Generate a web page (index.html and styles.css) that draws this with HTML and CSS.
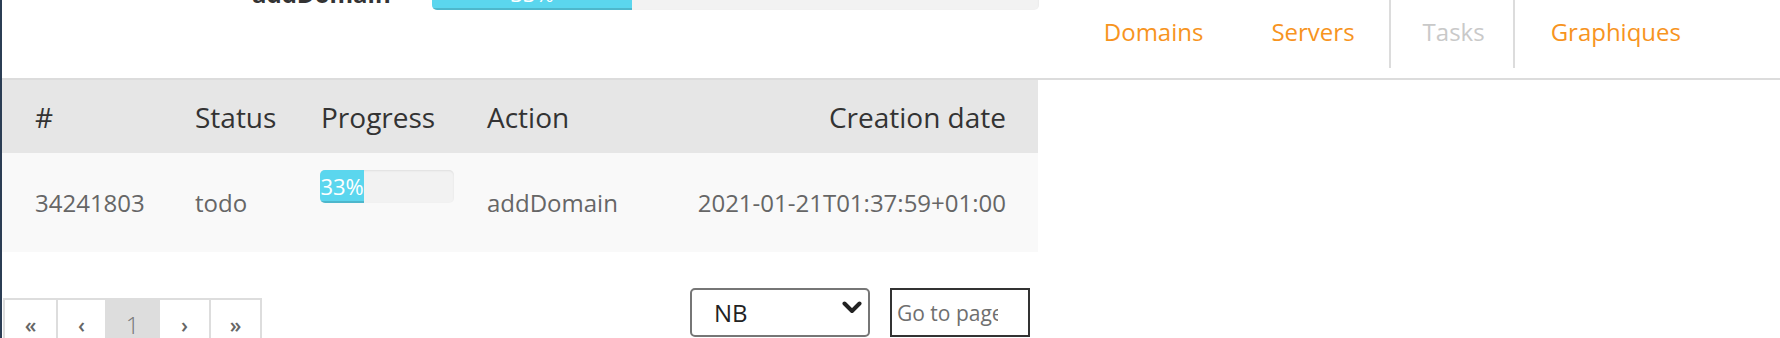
FILE: index.html
```html
<!DOCTYPE html>
<html lang="en">
<head>
<meta charset="utf-8">
<title>Tasks</title>
<link rel="stylesheet" href="styles.css">
</head>
<body>
<div class="page">
  <header class="topbar">
    <div class="prev-row">
      <span class="prev-action">addDomain</span>
      <div class="progress progress-wide"><div class="progress-bar" style="width:33%">33%</div></div>
    </div>
    <nav class="nav">
      <a class="nav-item" href="#">Domains</a>
      <a class="nav-item" href="#">Servers</a>
      <a class="nav-item nav-item-active" href="#">Tasks</a>
      <a class="nav-item nav-item-last" href="#">Graphiques</a>
    </nav>
  </header>

  <main class="content">
    <div class="tasks">
      <div class="tasks-row tasks-head">
        <div class="cell">#</div>
        <div class="cell">Status</div>
        <div class="cell">Progress</div>
        <div class="cell">Action</div>
        <div class="cell cell-right">Creation date</div>
      </div>
      <div class="tasks-row tasks-body">
        <div class="cell">34241803</div>
        <div class="cell">todo</div>
        <div class="cell"><div class="progress progress-small"><div class="progress-bar" style="width:33%">33%</div></div></div>
        <div class="cell">addDomain</div>
        <div class="cell cell-right">2021-01-21T01:37:59+01:00</div>
      </div>
    </div>

    <div class="controls">
      <ul class="pagination">
        <li class="page-item page-first"><span class="page-link page-arrow">«</span></li>
        <li class="page-item page-prev"><span class="page-link page-arrow">‹</span></li>
        <li class="page-item page-item-active"><span class="page-link">1</span></li>
        <li class="page-item page-next"><span class="page-link page-arrow">›</span></li>
        <li class="page-item page-last"><span class="page-link page-arrow">»</span></li>
      </ul>
      <div class="controls-right">
        <div class="select-wrap">
          <select class="select-nb"><option>NB</option></select>
          <svg class="select-chevron" width="20" height="13" viewBox="0 0 20 13" aria-hidden="true"><polyline points="2.5,2.5 10,10 17.5,2.5" fill="none" stroke="#222" stroke-width="4" stroke-linecap="round" stroke-linejoin="round"/></svg>
        </div>
        <input class="goto" type="text" placeholder="Go to page">
      </div>
    </div>
  </main>
</div>
</body>
</html>
```

FILE: styles.css
```css
* { box-sizing: border-box; }

html, body {
  margin: 0;
  padding: 0;
  background: #fff;
}

body {
  font-family: "Open Sans", "Noto Sans", "Liberation Sans", sans-serif;
  overflow: hidden;
}

.page {
  border-left: 2px solid #2b3d54;
  min-height: 338px;
}

/* ---------- top bar ---------- */
.topbar {
  display: flex;
  align-items: flex-start;
  height: 80px;
  border-bottom: 2px solid #dcdcdc;
}

.prev-row {
  display: flex;
  align-items: flex-start;
  margin-top: -23px;
  padding-left: 250px;
  width: 1037px;
}

.prev-action {
  width: 180px;
  font-size: 24px;
  font-weight: 700;
  line-height: 33px;
  color: #333;
}

.progress {
  height: 33px;
  background: #f2f2f2;
  border-radius: 5px;
  box-shadow: inset 0 1px 2px rgba(0, 0, 0, 0.08);
  overflow: hidden;
  display: flex;
}

.progress-wide { width: 607px; }

.progress-bar {
  height: 100%;
  background: #5bd6ee;
  box-shadow: inset 0 -2px 0 rgba(0, 0, 0, 0.14);
  color: #fff;
  font-size: 22px;
  line-height: 33px;
  text-align: center;
  white-space: nowrap;
  display: flex;
  justify-content: center;
}

.nav {
  display: flex;
  margin-left: auto;
  margin-right: 65px;
}

.nav-item {
  display: block;
  padding: 15px 34px 19px;
  font-size: 24px;
  line-height: 34px;
  color: #f7941e;
  text-decoration: none;
}

.nav-item-active {
  color: #c9c9c9;
  border-left: 2px solid #dcdcdc;
  border-right: 2px solid #dcdcdc;
  padding-left: 32px;
  padding-right: 28px;
}

.nav-item-last { padding-left: 36px; }

/* ---------- table ---------- */
.tasks {
  width: 1036px;
}

.tasks-row {
  display: grid;
  grid-template-columns: 160px 126px 166px 1fr auto;
  align-items: center;
}

.cell {
  padding-left: 33px;
  white-space: nowrap;
}

.cell-right {
  text-align: right;
  padding-right: 32px;
}

.tasks-head {
  height: 73px;
  background: #e6e6e6;
  font-size: 28px;
  color: #333;
}

.tasks-body {
  height: 99px;
  background: #f9f9f9;
  font-size: 24px;
  color: #666;
}

.progress-small {
  width: 134px;
  margin-left: -1px;
  margin-bottom: 32px;
}

/* ---------- controls ---------- */
.controls {
  display: flex;
  align-items: flex-start;
  width: 1036px;
  padding-right: 8px;
  margin-top: 36px;
}

.pagination {
  display: flex;
  list-style: none;
  margin: 10px 0 0 1px;
  padding: 0;
}

.page-item + .page-item { margin-left: -2px; }

.page-link {
  display: block;
  border: 2px solid #dddddd;
  padding: 10px 0 14px;
  font-size: 21px;
  line-height: 30px;
  text-align: center;
  color: #555;
  background: #fff;
}

.page-first .page-link { width: 55px; }
.page-prev .page-link { width: 51px; }
.page-item-active .page-link { width: 55px; }
.page-next .page-link { width: 53px; }
.page-last .page-link { width: 53px; }

.page-arrow {
  font-weight: 600;
  color: #666;
}

.page-item-active .page-link {
  background: #dddddd;
  color: #777;
  font-size: 24px;
  font-weight: 300;
}

.controls-right {
  display: flex;
  align-items: flex-start;
  gap: 20px;
  margin-left: auto;
}

.select-wrap {
  position: relative;
  width: 180px;
  height: 49px;
}

.select-nb {
  appearance: none;
  -webkit-appearance: none;
  width: 100%;
  height: 100%;
  border: 2px solid #767676;
  border-radius: 5px;
  background: #fff;
  padding: 0 0 0 22px;
  font-family: inherit;
  font-size: 24px;
  color: #222;
}

.select-chevron {
  position: absolute;
  right: 8px;
  top: 13px;
  pointer-events: none;
}

.goto {
  width: 140px;
  height: 49px;
  border: 2px solid #333;
  border-radius: 0;
  padding: 0 30px 0 5px;
  font-family: inherit;
  font-size: 21px;
  color: #333;
  background: #fff;
}

.goto::placeholder {
  color: #6f6f6f;
  opacity: 1;
}
```
